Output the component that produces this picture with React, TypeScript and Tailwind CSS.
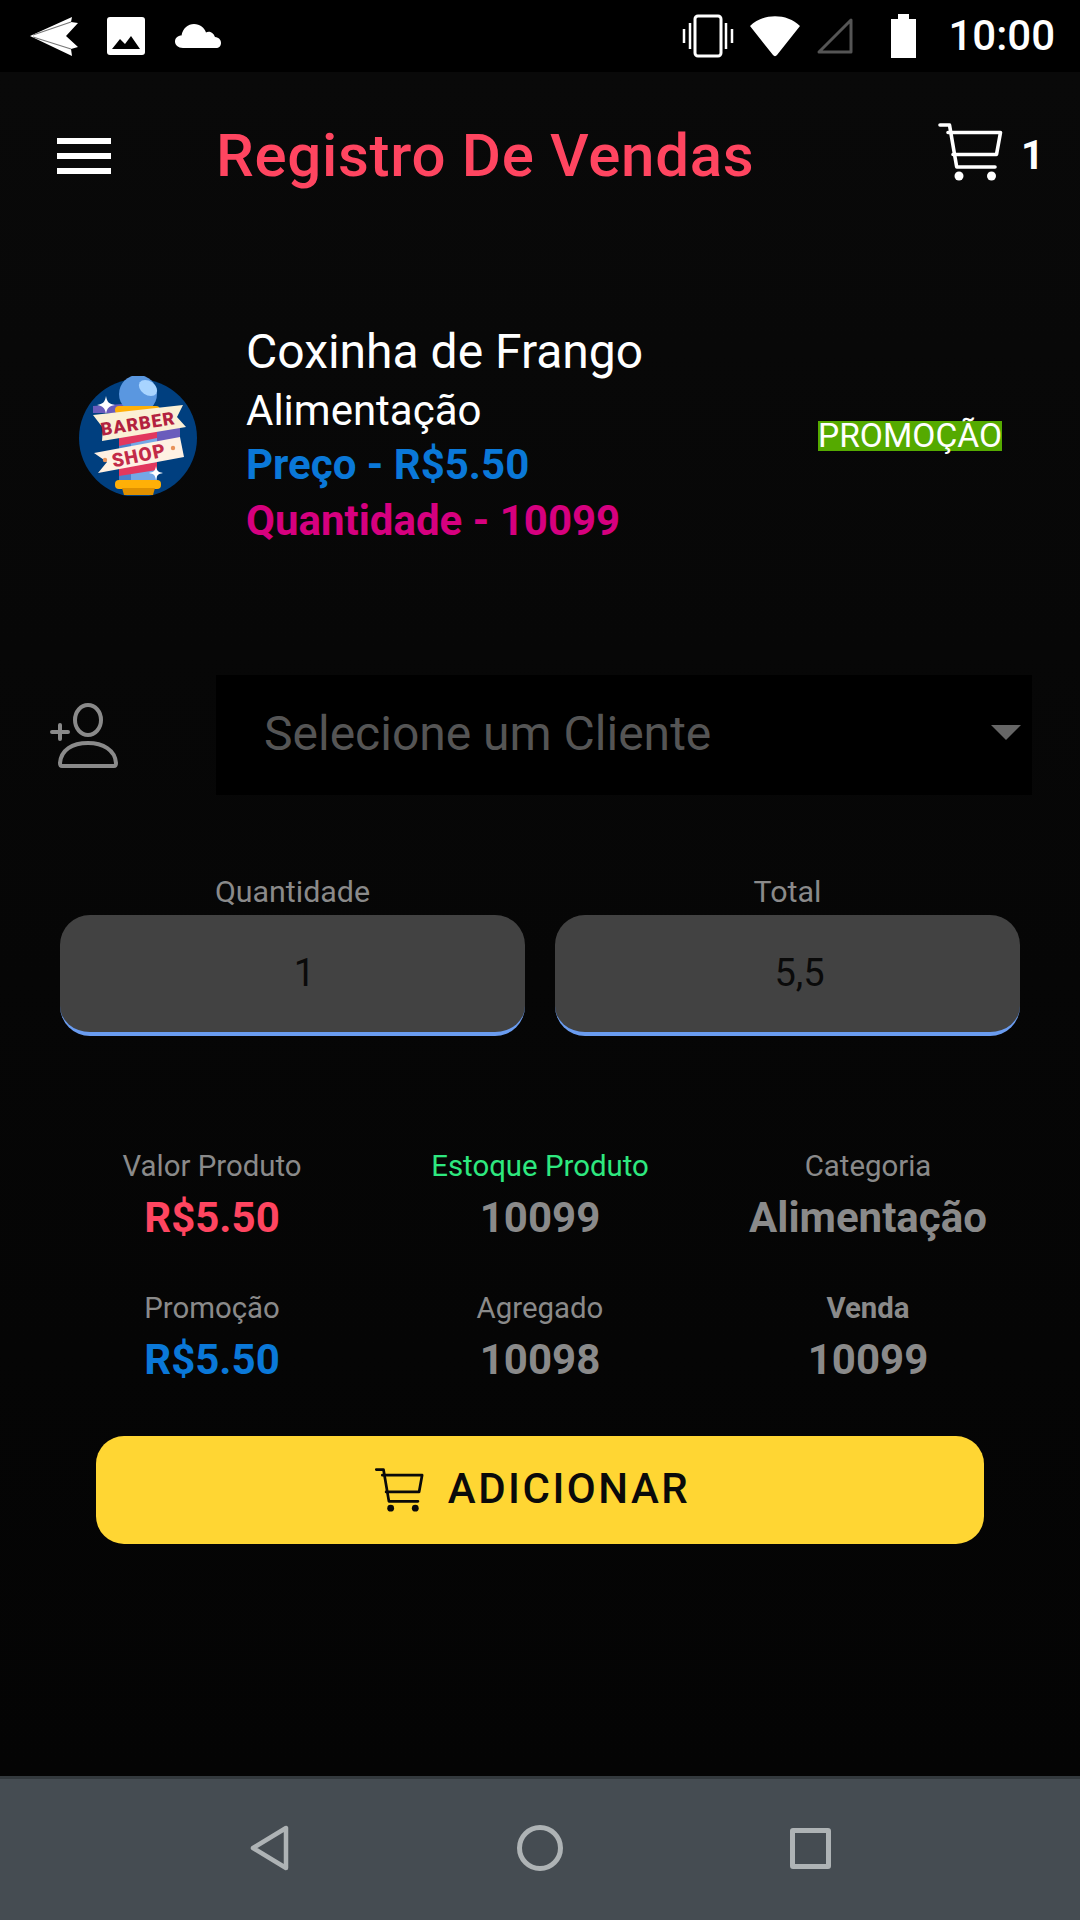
const FONT = { fontFamily: 'Roboto, sans-serif' };

function CartIcon({ className }: { className: string }) {
  return (
    <svg viewBox="0 0 66 60" fill="none" stroke="currentColor" strokeWidth="3.6" strokeLinecap="round" strokeLinejoin="round" className={className}>
      <path d="M3 3H12.5L19.7 45H58" />
      <path d="M11 10.5H63.5L59.5 32.5H16" />
      <circle cx="22" cy="54" r="4.5" fill="currentColor" stroke="none" />
      <circle cx="54.5" cy="54" r="4.5" fill="currentColor" stroke="none" />
    </svg>
  );
}

function StatusBar() {
  return (
    <div className="h-[72px] shrink-0 bg-black flex items-center text-white">
      <svg viewBox="0 0 48 40" className="w-[48px] h-[40px] ml-[30px] shrink-0">
        <path d="M0 20L42 1L41 6L48 7L36 20L48 31L41 33L42 40Z" fill="#fff" />
        <path d="M3 19L41 6M3 21L41 33" stroke="#777" strokeWidth="1.2" />
      </svg>
      <svg viewBox="0 0 38 38" className="w-[38px] h-[38px] ml-[29px] shrink-0">
        <rect width="38" height="38" rx="3" fill="#fff" />
        <path d="M5 32L13 22L18 27L24 19L33 32Z" fill="#000" />
      </svg>
      <svg viewBox="0 0 46 26" className="w-[46px] h-[26px] ml-[30px] shrink-0">
        <path d="M8 25C3 25 0 22 0 18.500C0 15 3 12.500 6.500 12.500C8 5 13 1 19 1C25 1 29.500 5 31 9.500C33 8 38 8 40 14C44 14.500 46 17 46 20C46 23 44 25 41 25Z" fill="#fff" />
      </svg>
      <div className="flex-1" />
      <svg viewBox="0 0 52 44" className="w-[52px] h-[44px] shrink-0" fill="none" stroke="#fff">
        <rect x="13" y="2" width="26" height="40" rx="3" strokeWidth="3" />
        <path d="M8 9V35M44 9V35" strokeWidth="2.500" />
        <path d="M2 15V29M50 15V29" strokeWidth="2.500" />
      </svg>
      <svg viewBox="0 0 52 42" className="w-[52px] h-[42px] ml-[15px] shrink-0">
        <path d="M1 11C14 -2 38 -2 51 11L28 40C27 41.500 25 41.500 24 40Z" fill="#fff" />
      </svg>
      <svg viewBox="0 0 36 36" className="w-[36px] h-[36px] ml-[16px] shrink-0" fill="none">
        <path d="M34 2V34H2Z" stroke="#555" strokeWidth="3" strokeLinejoin="round" />
      </svg>
      <div className="ml-[38px] w-[25px] h-[44px] shrink-0 flex flex-col items-center">
        <div className="w-[11px] h-[5px] bg-white" />
        <div className="w-[25px] flex-1 bg-white" />
      </div>
      <span className="ml-[32px] mr-[25px] text-[42px] leading-none font-medium">10:00</span>
    </div>
  );
}

function Header() {
  return (
    <div className="flex items-center h-[168px] pl-[57px] pr-[36px] text-white">
      <div className="w-[54px] flex flex-col gap-[9px] shrink-0">
        <div className="h-[6px] bg-white" />
        <div className="h-[6px] bg-white" />
        <div className="h-[6px] bg-white" />
      </div>
      <h1 className="ml-[105px] text-[60px] leading-none font-medium text-[#ff4560] tracking-[0.7px] whitespace-nowrap">Registro De Vendas</h1>
      <div className="flex-1" />
      <CartIcon className="w-[66px] h-[60px] mb-[8px] text-white" />
      <span className="ml-[18px] text-[40px] leading-none font-bold">1</span>
    </div>
  );
}

function BarberLogo() {
  return (
    <svg viewBox="0 0 120 120" className="w-[120px] h-[120px] shrink-0">
      <circle cx="60" cy="62" r="59" fill="#003f7f" />
      <rect x="41" y="37" width="38" height="70" fill="#74a8e6" />
      <rect x="41" y="37" width="12" height="70" fill="#4c80cc" />
      <path d="M41 92L79 86V94L41 100Z" fill="#e2375e" />
      <path d="M41 62L79 54V62L41 70Z" fill="#e2375e" />
      <path d="M15 37L15 30L45 28V37Z" fill="#6a5cbc" />
      <path d="M79 50L102 48V68L79 70Z" fill="#6a5cbc" />
      <circle cx="60" cy="18" r="19" fill="#5a97e0" />
      <ellipse cx="70" cy="12" rx="10" ry="7" transform="rotate(35 70 12)" fill="#a8d4ff" />
      <rect x="37" y="30" width="45" height="8" rx="4" fill="#ffb007" />
      <path d="M15 39L105 29L99 41L108 51L24 65L25 52Z" fill="#fbf0d5" />
      <path d="M16 77L102 61L106 81L20 97L29 86Z" fill="#fff1e3" />
      <text x="60" y="54" transform="rotate(-9 60 48)" textAnchor="middle" fontFamily="Roboto, sans-serif" fontWeight="900" fontSize="18" letterSpacing="1" fill="#b3223f">BARBER</text>
      <text x="61" y="86" transform="rotate(-12 61 80)" textAnchor="middle" fontFamily="Roboto, sans-serif" fontWeight="900" fontSize="19" letterSpacing="1" fill="#c22a48">SHOP</text>
      <circle cx="27" cy="84" r="2.200" fill="#e8925a" />
      <circle cx="95" cy="72" r="2.200" fill="#e8925a" />
      <path d="M28 20C29 26 31 28 37 29C31 30 29 32 28 38C27 32 25 30 19 29C25 28 27 26 28 20Z" fill="#fff" />
      <path d="M78 90C79 95 80 96 85 97C80 98 79 99 78 104C77 99 76 98 71 97C76 96 77 95 78 90Z" fill="#fff" />
      <rect x="37" y="104" width="46" height="9" rx="4" fill="#ffb007" />
      <path d="M44 112H77L75 119H46Z" fill="#e09000" />
    </svg>
  );
}

function Stat({ label, value, labelClass, valueClass }: { label: string; value: string; labelClass?: string; valueClass?: string }) {
  return (
    <div className="flex flex-col items-center">
      <span className={`text-[29.4px] leading-[34px] ${labelClass ?? 'text-[#8a8a8a]'}`}>{label}</span>
      <span className={`mt-[11px] text-[42px] leading-[47px] font-bold ${valueClass ?? 'text-[#8a8a8a]'}`}>{value}</span>
    </div>
  );
}

function AmountField({ label, value }: { label: string; value: string }) {
  return (
    <div className="w-[465px] flex flex-col items-center">
      <span className="text-[30.4px] leading-[34px] text-[#8a8a8a]">{label}</span>
      <div className="mt-[6px] w-full h-[121px] bg-[#424242] rounded-[30px] border-b-[4px] border-[#6a9cf0] flex items-center justify-center pl-[24px] text-[38px] text-[#0a0a0a]">
        {value}
      </div>
    </div>
  );
}

export default function App() {
  return (
    <div className="w-[1080px] h-[1920px] flex flex-col bg-[#060606]" style={FONT}>
      <StatusBar />
      <main className="flex-1 flex flex-col bg-gradient-to-b from-[#090909] to-[#040404]">
        <Header />

        <section className="flex items-center mt-[81px] pl-[78px] pr-[78px]">
          <BarberLogo />
          <div className="ml-[48px] flex flex-col text-white">
            <span className="text-[48px] leading-[62px]">Coxinha de Frango</span>
            <span className="text-[42px] leading-[56px]">Alimentação</span>
            <span className="text-[42px] leading-[52px] font-bold text-[#0a78d8]">Preço - R$5.50</span>
            <span className="text-[42px] leading-[60px] font-bold text-[#d6007f]">Quantidade - 10099</span>
          </div>
          <div className="flex-1" />
          <span className="w-[184px] h-[30px] bg-[#55aa00] text-[33.6px] leading-[30px] text-white text-center whitespace-nowrap">PROMOÇÃO</span>
        </section>

        <section className="flex items-center mt-[124px] pl-[50px] pr-[48px]">
          <svg viewBox="0 0 68 66" fill="none" stroke="#8a8a8a" strokeWidth="4" strokeLinecap="round" strokeLinejoin="round" className="w-[68px] h-[66px] shrink-0">
            <ellipse cx="38" cy="18" rx="13" ry="15" />
            <path d="M10 61C11 48 22 41 38 41C53 41 65 48 66 61C66 63 65 64 64 64H12C11 64 10 63 10 61Z" />
            <path d="M2 30H18M10 23V37" />
          </svg>
          <div className="ml-[98px] flex-1 h-[120px] bg-black flex items-center justify-between pl-[48px] pr-[11px]">
            <span className="pb-[2px] text-[48px] text-[#555555]">Selecione um Cliente</span>
            <div className="mb-[5px] w-0 h-0 border-l-[15px] border-r-[15px] border-t-[15px] border-l-transparent border-r-transparent border-t-[#666666]" />
          </div>
        </section>

        <section className="flex justify-between mt-[80px] pl-[60px] pr-[60px]">
          <AmountField label="Quantidade" value="1" />
          <AmountField label="Total" value="5,5" />
        </section>

        <section className="grid grid-cols-3 gap-y-[50px] mt-[113px] pl-[48px] pr-[48px]">
          <Stat label="Valor Produto" value="R$5.50" valueClass="text-[#ff4560]" />
          <Stat label="Estoque Produto" value="10099" labelClass="text-[#2ee87f]" />
          <Stat label="Categoria" value="Alimentação" />
          <Stat label="Promoção" value="R$5.50" valueClass="text-[#0a78d8]" />
          <Stat label="Agregado" value="10098" />
          <Stat label="Venda" value="10099" labelClass="text-[#8a8a8a] font-bold" />
        </section>

        <button className="mt-[53px] ml-[96px] w-[888px] h-[108px] rounded-[28px] bg-[#ffd633] flex items-center justify-center pr-[16px] text-[#0a0a0a]">
          <CartIcon className="w-[50px] h-[46px]" />
          <span className="ml-[24px] pb-[4px] text-[42px] font-medium tracking-[2.5px]">ADICIONAR</span>
        </button>
      </main>

      <nav className="h-[144px] shrink-0 bg-[#454c52] border-t-[3px] border-[#33393d] flex items-center justify-center pb-[3px] text-[#aeb3b5]">
        <svg viewBox="0 0 40 46" fill="none" stroke="currentColor" strokeWidth="4.500" strokeLinejoin="round" className="w-[40px] h-[46px]">
          <path d="M36 3V43L3 23Z" />
        </svg>
        <div className="ml-[227px] w-[46px] h-[46px] rounded-full border-[5px] border-[#aeb3b5]" />
        <div className="ml-[227px] w-[41px] h-[41px] rounded-[3px] border-[5px] border-[#aeb3b5]" />
      </nav>
    </div>
  );
}
